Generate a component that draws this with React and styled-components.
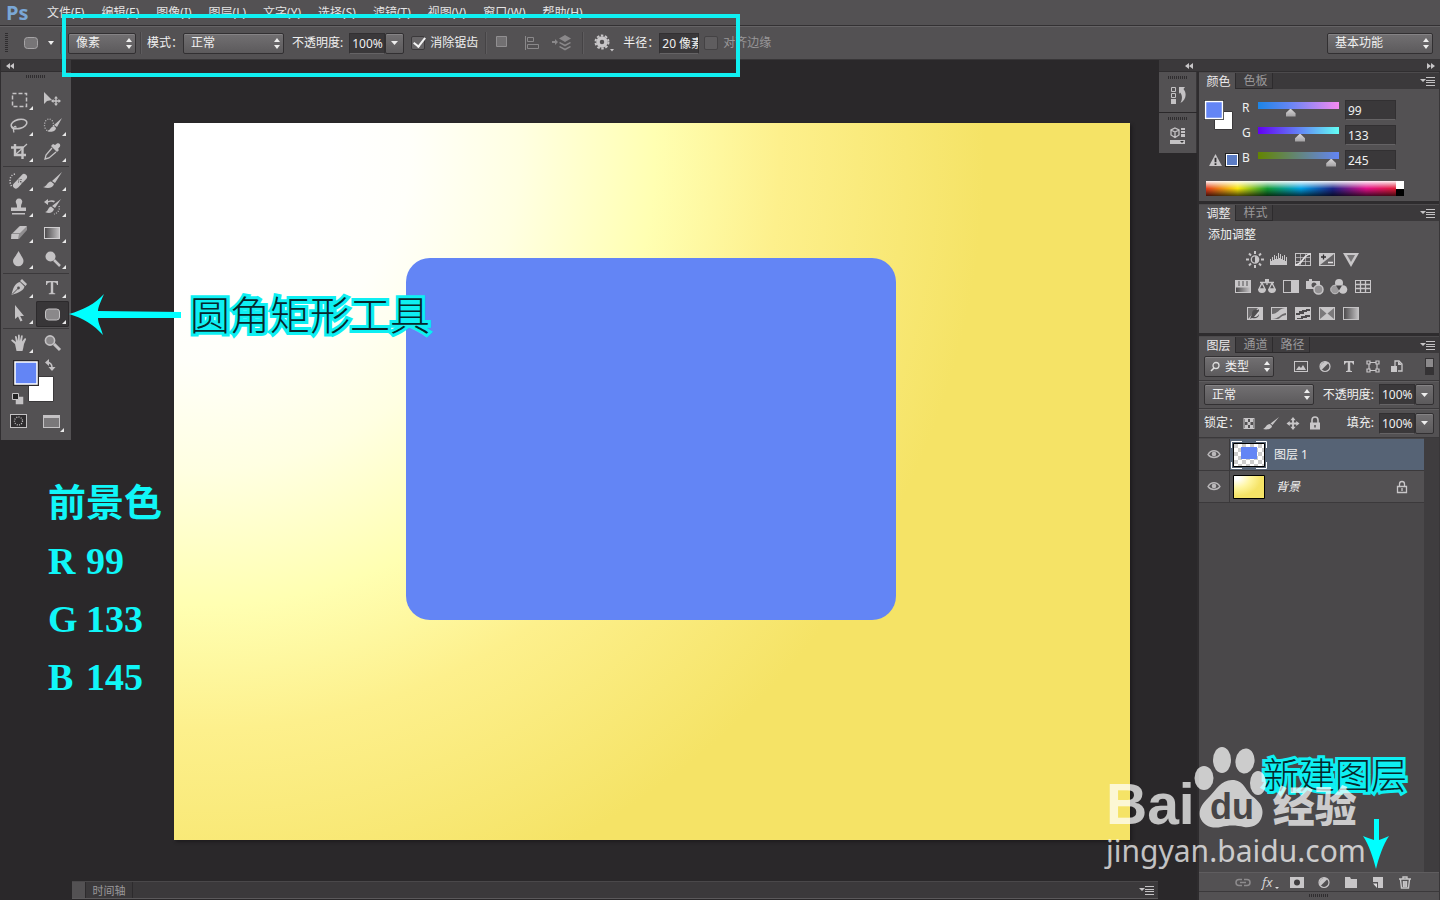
import React, { useState } from 'react';
import styled, { createGlobalStyle, css } from 'styled-components';

const GlobalStyle = createGlobalStyle`
  * {
    box-sizing: border-box;
  }

  body {
    margin: 0;
    background: #2a282a;
    color: #f0f0f0;
    font: 12px/16px "Noto Sans", "Noto Sans CJK SC", sans-serif;
    overflow: hidden;
  }

  button,
  input,
  select {
    font: inherit;
    color: inherit;
    margin: 0;
    padding: 0;
    border: 0;
    outline: 0;
    background: none;
  }
`;

const raised = css`
  border: 1px solid #323032;
  border-radius: 2px;
  background: linear-gradient(#727072, #5c5a5c);
  box-shadow: inset 0 1px 0 #858385;
`;

const Window = styled.div`
  position: relative;
  display: flex;
  flex-direction: column;
  height: 100vh;
`;

/* ---------- top bars ---------- */

const MenuBar = styled.nav`
  display: flex;
  align-items: center;
  gap: 17px;
  height: 26px;
  padding-left: 6px;
  background: #535153;
  border-bottom: 1px solid #333133;
`;

const PsLogo = styled.span`
  width: 24px;
  font: bold 20px/24px "Open Sans", sans-serif;
  color: #7aa7d6;
`;

const MenuItem = styled.button`
  white-space: nowrap;
  color: #e4e4e4;
`;

const OptionsBar = styled.div`
  display: flex;
  align-items: center;
  height: 34px;
  padding: 0 7px 0 5px;
  background: #535153;
  border-top: 1px solid #656365;
  border-bottom: 1px solid #383638;
  white-space: nowrap;
`;

const Item = styled.div`
  display: flex;
  align-items: center;
  margin-left: ${(p) => p.$gap || 0}px;
`;

const IconRow = styled(Item)`
  gap: ${(p) => p.$space}px;
`;

const Push = styled.div`
  margin-left: auto;
`;

const Divider = styled.span`
  width: 2px;
  height: 22px;
  margin-left: ${(p) => p.$gap || 0}px;
  background: #454345;
  border-right: 1px solid #5e5c5e;
`;

const SideGrip = styled.span`
  width: 3px;
  height: 20px;
  background: repeating-linear-gradient(#2f2d2f 0 1px, transparent 1px 2px);
`;

const SelectWrap = styled.div`
  position: relative;
  width: ${(p) => p.$width}px;

  select {
    width: 100%;
    height: 21px;
    padding-left: ${(p) => p.$indent || 7}px;
    appearance: none;
    ${raised}
  }

  > svg {
    position: absolute;
    top: 5px;
    right: 3px;
    pointer-events: none;
  }

  > svg:nth-of-type(2) {
    right: auto;
    left: 6px;
  }
`;

const Field = styled.input`
  width: ${(p) => p.$width}px;
  height: ${(p) => p.$height || 21}px;
  padding-left: 2px;
  background: #3a383a;
  border: 1px solid #323032;
  border-bottom-color: #656365;
`;

const DropButton = styled.button`
  display: grid;
  place-items: center;
  width: 19px;
  height: 21px;
  ${raised}
`;

const Check = styled.input.attrs({ type: 'checkbox' })`
  appearance: none;
  display: grid;
  place-items: center;
  width: 14px;
  height: 14px;
  border: 1px solid #3b393b;
  border-radius: 2px;
  background: #676567;
  margin-right: 5px;
  opacity: ${(p) => (p.disabled ? 0.6 : 1)};

  &:checked::after {
    content: '';
    width: 5px;
    height: 10px;
    border: solid #f4f4f4;
    border-width: 0 2px 2px 0;
    transform: translate(1px, -2px) rotate(38deg);
  }
`;

const CheckLabel = styled.label`
  color: ${(p) => (p.$dim ? '#989698' : '#f0f0f0')};
`;

const IconButton = styled.button`
  display: grid;
  place-items: center;
  color: ${(p) => (p.$dim ? '#8a888a' : '#c8c6c8')};
`;

/* ---------- workspace ---------- */

const Workspace = styled.div`
  display: flex;
  flex: 1;
  min-height: 0;
`;

const Collapse = styled.div`
  display: flex;
  align-items: center;
  justify-content: space-between;
  height: 12px;
  padding: 0 5px 0 ${(p) => p.$indent || 5}px;
  background: #3b393b;
  border-bottom: 1px solid #302e30;
`;

const ToolBox = styled.aside`
  align-self: flex-start;
  width: 71px;
  background: #535153;
  border-left: 1px solid #302e30;
`;

const Grip = styled.div`
  width: 20px;
  height: 3px;
  margin: ${(p) => p.$margin || '4px auto 6px'};
  background: repeating-linear-gradient(90deg, #2f2d2f 0 1px, transparent 1px 2px);
`;

const ToolGrid = styled.div`
  display: grid;
  grid-template-columns: 33px 33px;
  margin: 0 2px;
  padding-bottom: 1px;
  border-bottom: ${(p) => (p.$last ? '0' : '1px solid #3b393b')};
  margin-bottom: 1px;
`;

const ToolButton = styled.button`
  height: 26px;
  color: #c4c2c4;
  border-radius: 2px;
  background: ${(p) => (p.$active ? '#383638' : 'none')};
  box-shadow: ${(p) => (p.$active ? 'inset 0 0 0 1px #2c2a2c' : 'none')};

  svg {
    display: block;
  }
`;

const ToolFooter = styled.div`
  display: flex;
  justify-content: space-between;
  height: 26px;
  padding: 0 7px 0 9px;
  color: #c4c2c4;
`;

const Stage = styled.main`
  position: relative;
  display: flex;
  flex-direction: column;
  flex: 1;
  min-width: 0;
  margin-left: 1px;
`;

const Artboard = styled.div`
  flex: 1;
  margin: 63px 29px 41px 102px;
  padding: 135px 234px 220px 232px;
  display: flex;
  background: radial-gradient(
    circle at 26px 27px,
    #ffffff 0,
    #ffffff 130px,
    #fffffa 210px,
    #ffffe2 320px,
    #ffffb2 455px,
    #fdf08c 580px,
    #f5e366 785px
  );
  box-shadow: 2px 2px 3px #1e1c1e;
`;

const RoundedShape = styled.div`
  flex: 1;
  border-radius: 24px;
  background: #6385f5;
`;

const Timeline = styled.div`
  display: flex;
  align-items: stretch;
  height: 18px;
  margin: 0 1px 1px 0;
  background: #3b393b;
  border-top: 1px solid #4a484a;
  border-bottom: 1px solid #5b595b;

  &::before {
    content: '';
    width: 13px;
    background: #535153;
  }
`;

const TimelineTab = styled.button`
  width: 48px;
  border: solid #2d2b2d;
  border-width: 0 1px;
  font-size: 11px;
  line-height: 15px;
  color: #9a989a;
`;

/* ---------- dock ---------- */

const Dock = styled.aside`
  display: flex;
  flex-direction: column;
  width: 281px;
  background: #2e2c2e;
`;

const DockBody = styled.div`
  display: flex;
  flex: 1;
  gap: 2px;
  min-height: 0;
`;

const IconStrip = styled.div`
  width: 38px;
  background: #2a282a;
`;

const StripCell = styled.button`
  display: flex;
  flex-direction: column;
  align-items: center;
  width: 100%;
  height: 40px;
  margin-bottom: 1px;
  background: #535153;
  border-right: 1px solid #383638;
  color: #c4c2c4;
`;

const Panels = styled.div`
  display: flex;
  flex-direction: column;
  flex: 1;
  gap: 3px;
  min-width: 0;
  border-right: 1px solid #383638;
`;

const Panel = styled.section`
  display: flex;
  flex-direction: column;
  flex: ${(p) => (p.$grow ? '1' : 'none')};
  height: ${(p) => (p.$height ? `${p.$height}px` : 'auto')};
  min-height: 0;
  background: #535153;
`;

const Tabs = styled.div`
  display: flex;
  height: 17px;
  flex: none;
  background: #3b393b;
  border-top: 1px solid #4c4a4c;
`;

const Tab = styled.button`
  width: 37px;
  padding-left: 3px;
  line-height: 15px;
  color: ${(p) => (p.$active ? '#eceaec' : '#9a989a')};
  background: ${(p) => (p.$active ? '#535153' : '#3f3d3f')};
  border-right: 1px solid #2d2b2d;
  border-bottom: ${(p) => (p.$active ? '0' : '1px solid #2d2b2d')};
`;

const TabMenu = styled.button`
  display: grid;
  place-items: center;
  margin-left: auto;
  padding-right: 4px;
  color: #c4c2c4;
`;

const ColorBody = styled.div`
  display: grid;
  grid-template-columns: 34px 1fr;
  column-gap: 4px;
  padding: 11px 44px 0 5px;
`;

const SwatchColumn = styled.div`
  display: flex;
  flex-direction: column;
  justify-content: space-between;
  height: 66px;
`;

const WarnRow = styled.div`
  display: flex;
  align-items: center;
  gap: 4px;
  padding-left: 5px;
`;

const SmallSwatch = styled.span`
  width: 12px;
  height: 12px;
  background: #5b7cc4;
  border: 1px solid #fff;
  box-shadow: 0 0 0 1px #222;
`;

const Channel = styled.label`
  display: grid;
  grid-template-columns: 15px 81px 50px;
  column-gap: 1px;
  height: 25px;

  input[type='text'] {
    margin-left: 5px;
  }
`;

const Slider = styled.input.attrs({ type: 'range', min: 0, max: 255 })`
  appearance: none;
  width: 81px;
  height: 17px;

  &::-webkit-slider-runnable-track {
    height: 16px;
    background: ${(p) => p.$track} 0 1px / 100% 7px no-repeat;
  }

  &::-webkit-slider-thumb {
    appearance: none;
    width: 10px;
    height: 8px;
    margin-top: 8px;
    background: linear-gradient(#d8d6d8, #a09ea0);
    clip-path: polygon(50% 0, 100% 60%, 100% 100%, 0 100%, 0 60%);
  }
`;

const Spectrum = styled.div`
  display: flex;
  justify-content: flex-end;
  height: 15px;
  margin: 6px 35px 0 7px;
  background:
    linear-gradient(rgba(255, 255, 255, 0.95), transparent 50%, rgba(0, 0, 0, 0.7)),
    linear-gradient(90deg, #e33a1e, #f8e60c 16%, #149b36 31%, #00a0e4 48%, #1c2488 64%, #e2108a 81%, #e02020);

  &::after {
    content: '';
    width: 8px;
    background: linear-gradient(#fff 50%, #000 50%);
  }
`;

const AdjustTitle = styled.p`
  margin: 6px 0 3px 9px;
`;

const AdjustRow = styled.div`
  display: flex;
  justify-content: center;
  gap: 6px;
  height: 27px;
  padding-right: 32px;
  align-items: center;
`;

const LayerBar = styled.div`
  display: flex;
  align-items: center;
  flex: none;
  height: ${(p) => p.$height || 28}px;
  padding: 0 5px;
  border-bottom: 1px solid #3b393b;
  box-shadow: 0 1px 0 #5f5d5f;
  white-space: nowrap;
`;

const Toggle = styled.button`
  width: 9px;
  height: 17px;
  margin-left: auto;
  background: linear-gradient(#8c8a8c 50%, #353335 50%);
  border: 1px solid #353335;
`;

const LayerList = styled.ul`
  flex: 1;
  margin: 0;
  padding: 1px 15px 0 0;
  list-style: none;
  background: linear-gradient(90deg, #4a484a calc(100% - 15px), #3f3d3f calc(100% - 15px));
`;

const LayerRow = styled.li`
  display: flex;
  align-items: center;
  height: 32px;
  padding-right: 13px;
  border-bottom: 1px solid #3b393b;
  background: ${(p) => (p.$active ? '#566375' : '#535153')};
  font-style: ${(p) => (p.$italic ? 'italic' : 'normal')};
`;

const EyeButton = styled.button`
  display: grid;
  place-items: center;
  width: 31px;
  height: 31px;
  background: #535153;
  border-right: 1px solid #3b393b;
  color: #bab8ba;
`;

const LayerName = styled.span`
  flex: 1;
  padding-left: ${(p) => p.$pad}px;
`;

const LayerFooter = styled.div`
  display: flex;
  align-items: center;
  height: 20px;
  padding: 0 2px 0 35px;
  gap: 9px;
  border-top: 1px solid #5f5d5f;
  border-bottom: 1px solid #3b393b;
`;

/* ---------- notes over the window ---------- */

const Frame = styled.div`
  position: absolute;
  top: 14px;
  left: 62px;
  width: 678px;
  height: 63px;
  border: 4px solid #10f0f2;
  pointer-events: none;
`;

const Outlined = styled.strong`
  position: absolute;
  font-family: "Noto Sans CJK SC", sans-serif;
  font-weight: 300;
  color: #06282c;
  -webkit-text-stroke: 6px #0eeff2;
  paint-order: stroke fill;
  stroke-linejoin: round;
  white-space: nowrap;
`;

const ToolNote = styled(Outlined)`
  top: 285px;
  left: 190px;
  font-size: 40px;
  line-height: 56px;
`;

const LayerNote = styled(Outlined)`
  right: 33px;
  bottom: 101px;
  font-size: 36px;
  line-height: 52px;
`;

const ColorNote = styled.div`
  position: absolute;
  top: 474px;
  left: 48px;
  font: bold 38px/58px "Liberation Serif", "Noto Sans CJK SC", serif;
  color: #10f6f8;
  white-space: nowrap;
`;

const NoteRow = styled.div`
  display: grid;
  grid-template-columns: 38px auto;
`;

const ArrowLeft = styled.svg`
  position: absolute;
  top: 293px;
  left: 69px;
`;

const ArrowDown = styled.svg`
  position: absolute;
  right: 49px;
  bottom: 31px;
`;

const Watermark = styled.div`
  position: absolute;
  right: 74px;
  bottom: 29px;
  width: 260px;
  color: rgba(255, 255, 255, 0.72);
  pointer-events: none;
`;

const Brand = styled.div`
  display: flex;
  align-items: flex-end;
  height: 84px;
  font: bold 57px/54px "Liberation Sans", sans-serif;

  b {
    font: 900 42px/54px "Noto Sans CJK SC", sans-serif;
    margin-left: 6px;
  }

  svg {
    flex: none;
    margin: 0 0 3px -4px;
  }
`;

const Site = styled.div`
  font: 30px/40px "Noto Sans", sans-serif;
`;

/* ---------- drawings ---------- */

const corner = <path d="M30 19v4h-4z" fill="#e8e8e8" />;

const stroke = { fill: 'none', stroke: 'currentColor', strokeWidth: 2 };
const thin = { fill: 'none', stroke: 'currentColor', strokeWidth: 1 };
const fill = { fill: 'currentColor' };
const dark = '#535153';

const crossArrows = 'M0-5l2 2.5H.7V-.7H2.5V-2L5 0 2.5 2V.7H.7v1.8H2L0 5-2 2.5h1.3V.7h-1.8V2L-5 0l2.5-2v1.3h1.8v-1.8H-2z';

const tools = {
  marquee: <rect x="9.5" y="6.5" width="14" height="13" {...thin} strokeWidth="1.5" strokeDasharray="4 2" />,
  move: (
    <g {...fill}>
      <path d="M8 5v12l3-3 5-1z" />
      <path d={crossArrows} transform="translate(20 14)" />
    </g>
  ),
  lasso: (
    <g {...stroke} strokeWidth="1.6">
      <ellipse cx="16" cy="11" rx="8" ry="4.5" transform="rotate(-14 16 11)" />
      <path d="M9 13c-1 3 4 4 4 1.500s-4-1-2 5" strokeWidth="1.2" />
    </g>
  ),
  quick: (
    <g>
      <ellipse cx="13" cy="12" rx="4.500" ry="6" {...thin} strokeWidth="1.300" strokeDasharray="1 1.5" />
      <path d="M26 5l-5 9-3-2zM18 13l2 2c0 3-5 5-9 3 3 0 3-4 7-5z" {...fill} />
    </g>
  ),
  crop: (
    <g {...stroke}>
      <path d="M12 5v11h11M8 8.500h11.500V20" strokeWidth="2.400" />
      <path d="M12 16L24 5" strokeWidth="1.200" />
    </g>
  ),
  dropper: (
    <g>
      <path d="M19 6l2-1.500c2-1 4 1 3 3L22 10l1 1-2 2-6-6 2-2z" {...fill} />
      <path d="M16 9l-6 7-1 4 4-1 7-6" {...stroke} strokeWidth="1.300" />
    </g>
  ),
  heal: (
    <g>
      <path d="M12 6c-6 1-6 9-3 13" {...thin} strokeWidth="1.500" strokeDasharray="1.200 1.500" />
      <path d="M13 17.500L21 9" stroke="currentColor" strokeWidth="6" strokeLinecap="round" />
      <path d="M14 10l6 6M13 13h.1M16 10h.1M15 14h3M18 11v3" stroke={dark} strokeWidth="1.200" strokeDasharray="1 1.200" />
    </g>
  ),
  brush: <path d="M26 4L19 15l-3-2zM15 13.500l3 2.500c-1 4-6 5-11 3 4-.5 4-5 8-5.500z" {...fill} />,
  stamp: (
    <g {...fill}>
      <path d="M16 4.500a3.200 3.200 0 013 4.500c-1 2-1 3-1 4.500h5V17H8v-3.500h6c0-1.500 0-2.500-1-4.500a3.200 3.200 0 013-4.500z" />
      <path d="M9 19h13v1.500H9z" />
    </g>
  ),
  history: (
    <g>
      <path d="M25 5l-6 9-3-2zM15 12.500l3 2.500c-1 4-5 5-9 3 3 0 3-5 6-5.500zM8 8l4-3v2c3-1 5-1 7 0l-1 1.500c-2-1-4-1-6 0V11z" {...fill} />
      <path d="M23 12c1 4-1 7-5 8" {...thin} strokeWidth="1.300" strokeDasharray="1 1.500" />
    </g>
  ),
  eraser: (
    <g>
      <path d="M8.500 14L16 6.500h8V10l-8 9H8.500z" fill="#8f8d8f" />
      <path d="M10 13l7-7h7l-7 7zM8.500 14H16l-1 5H8z" {...fill} />
    </g>
  ),
  gradient: <rect x="8.500" y="7.500" width="15" height="11" fill="url(#fade)" stroke="#d0ced0" />,
  drop: <path d="M15.500 5c2 4 5 7 5 10a5 5 0 01-10.500 0c0-3 4-6 5.500-10z" {...fill} />,
  dodge: (
    <g>
      <circle cx="14.500" cy="10.500" r="5" {...fill} />
      <path d="M18 14l6 6" {...stroke} strokeWidth="2.500" />
    </g>
  ),
  pen: (
    <g>
      <path d="M19 4l5 5-1.500 2-5.500-5zM17 7l4.500 4.500c-1 4-5 6-13 8.500C10 13 12 8 17 7z" {...fill} />
      <path d="M9 19.500l6-6" stroke={dark} />
      <circle cx="15.500" cy="13" r="1.400" fill={dark} />
    </g>
  ),
  type: <path d="M10 6h12v4h-1c-.3-2-1-2.800-3.800-2.800V17c0 1 .5 1.300 2 1.300v.9h-6.400v-.9c1.500 0 2-.3 2-1.300V7.200C12 7.200 11.300 8 11 10h-1z" {...fill} />,
  path: <path d="M12 4v14l3-2.500 2.500 5 2-1-2.300-4.500H21z" {...fill} />,
  shape: <rect x="9.500" y="8" width="14" height="11" rx="3" fill="#8a888a" stroke="#c4c2c4" />,
  hand: (
    <path
      d="M12 14l-3.500-3c-.8-1 .5-2 1.400-1.200L13 12l-1-5c-.2-1.300 1.500-1.500 1.800-.3L15 11V5.500c0-1.200 1.800-1.200 1.800 0V11l1.200-5c.3-1 1.900-.8 1.700.4L19 11.500l2.500-3c.8-.8 2 0 1.500 1L21 14c-.5 3-1 5-1.500 7h-6z"
      {...fill}
    />
  ),
  zoom: (
    <g>
      <circle cx="14" cy="10.500" r="4.600" fill="#8a888a" stroke="currentColor" strokeWidth="1.600" />
      <path d="M18 14l6 6" {...stroke} strokeWidth="3" />
    </g>
  ),
};

const toolGroups = [
  [['marquee', 1], ['move', 0], ['lasso', 1], ['quick', 1], ['crop', 1], ['dropper', 1]],
  [['heal', 1], ['brush', 1], ['stamp', 1], ['history', 1], ['eraser', 1], ['gradient', 1], ['drop', 1], ['dodge', 1]],
  [['pen', 1], ['type', 1], ['path', 1], ['shape', 1]],
  [['hand', 1], ['zoom', 0]],
];

const frame = <rect x="1.500" y="2.500" width="15" height="12" {...thin} />;

// 18 x 17 drawings used by the panels
const glyphs = {
  sun: (
    <g>
      <circle cx="9" cy="8.500" r="3.700" {...stroke} strokeWidth="1.300" />
      <path d="M9 5a3.500 3.500 0 010 7z" {...fill} />
      <path d="M9 0v3M9 14v3M0 8.500h3M15 8.500h3M3 2.500l2 2M13 12.500l2 2M15 2.500l-2 2M5 12.500l-2 2" {...stroke} />
    </g>
  ),
  levels: <path d="M0 14V8h1v2h1V6h1v3h1V4h1v4h1V5h1v3h1V2h1v5h1V3h1v5h1V5h1v4h1V4h1v6h1V6h1v8z" {...fill} />,
  curves: (
    <g>
      {frame}
      <path d="M2 6.500h15M2 10.500h15M6.500 3v12M11.500 3v12" {...thin} strokeWidth=".7" />
      <path d="M1 14c9 0 7-11 16-11" fill="none" stroke="#e4e2e4" strokeWidth="1.600" />
    </g>
  ),
  exposure: (
    <g>
      <path d="M1 2h16v13H1z" {...fill} />
      <path d="M2 14L16 3v11z" fill="#656365" />
      <path d="M3 6h5M5.500 3.500v5" stroke="#2f2d2f" strokeWidth="1.300" />
      <path d="M10 11.500h5" stroke="#e0dee0" strokeWidth="1.500" />
    </g>
  ),
  vibrance: (
    <g>
      <path d="M1 2h16L9 16z" {...fill} />
      <path d="M5 4h8l-4 7z" fill="#777577" />
    </g>
  ),
  hue: (
    <g>
      <path d="M1 2h16v13H1z" {...fill} />
      <path d="M5 3v5M9 3v5M13 3v5" stroke={dark} />
      <path d="M2 9.500h14V14H2z" fill="url(#fade)" />
    </g>
  ),
  balance: (
    <g>
      <path d="M9 1v6M2 4.500h14M4 5l-3 6h6zM14 5l-3 6h6z" {...thin} strokeWidth="1.300" />
      <path d="M0 11a4 4 0 008 0zM10 11a4 4 0 008 0zM7 1h4v4H7z" {...fill} />
    </g>
  ),
  bw: (
    <g>
      {frame}
      <path d="M9 2h8v13H9z" {...fill} />
    </g>
  ),
  photo: (
    <g>
      <path d="M0 3h3V1h3v2h8v8H0z" {...fill} />
      <circle cx="8" cy="7" r="2.500" fill={dark} />
      <circle cx="12.500" cy="11.500" r="4.500" fill="#939193" stroke="currentColor" strokeWidth="1.500" />
    </g>
  ),
  mixer: (
    <g>
      <circle cx="9" cy="5" r="4" {...fill} />
      <circle cx="5" cy="11.500" r="4.300" fill="#9c9a9c" stroke="#c4c2c4" />
      <circle cx="13" cy="11.500" r="4.300" {...fill} />
      <path d="M6 7.500h6l-3 5z" fill="#474547" />
    </g>
  ),
  lookup: (
    <g>
      {frame}
      <path d="M1 6.500h16M1 10.500h16M6.500 2v13M11.500 2v13" {...thin} strokeWidth="1.300" />
    </g>
  ),
  invert: (
    <g>
      <path d="M1 2h16v13H1z" {...fill} />
      <path d="M2 14V3h10z" fill="#6b696b" />
      <path d="M6 9a4 4 0 016-4l1-1v5c0 4-4 5-7 4l-2 1z" fill="#504e50" />
      <path d="M8 12l5-6c1 4-2 6-5 6z" fill="#d4d2d4" />
    </g>
  ),
  poster: (
    <g>
      <path d="M1 2h16v13H1z" {...fill} />
      <path d="M2 9c6 0 6-5 13-6H2zM2 14c7 0 8-5 14-6v2c-6 1-6 4-8 4z" fill="#6b696b" />
    </g>
  ),
  threshold: (
    <g>
      <path d="M1 2h16v13H1z" {...fill} />
      <path d="M2 8h3V6h3V5h4V4h4v2h-3v1h-3v2H6v1H2zM3 13h4v-2h4v-1h5v2h-3v1H9v1H3z" fill="#4b494b" />
    </g>
  ),
  selective: (
    <g>
      <path d="M1 2h16v13H1z" {...fill} />
      <path d="M2 3v11l6.500-5.500zM16 3v11L9.500 8.500z" fill="#7b797b" />
    </g>
  ),
  map: <rect x="1.500" y="2.500" width="15" height="12" fill="url(#fade)" stroke="#c4c2c4" />,
  image: (
    <g>
      <rect x="2.500" y="3.500" width="13" height="10" {...thin} />
      <path d="M4 12l3-4 2 2 2-3 3 5z" {...fill} />
    </g>
  ),
  half: (
    <g>
      <circle cx="9" cy="8.500" r="5" {...stroke} strokeWidth="1.200" />
      <path d="M5.500 12A5 5 0 0112.500 5z" {...fill} />
    </g>
  ),
  text: <path d="M4 3h10v3.500h-1C12.700 5 12 4.500 10.200 4.500V12c0 .8.500 1 1.800 1v1H6v-1c1.300 0 1.800-.2 1.800-1V4.500C6 4.500 5.300 5 5 6.500H4z" {...fill} />,
  vector: (
    <g {...thin} strokeWidth="1.200">
      <path d="M5 4.500h8M5 12.500h8M5 5v7M13 5v7" />
      <path d="M3 3h3v3H3zM12 3h3v3h-3zM3 11h3v3H3zM12 11h3v3h-3z" fill={dark} />
    </g>
  ),
  smart: (
    <g>
      <path d="M7 8V3h4l3 3v7h-4" {...stroke} strokeWidth="1.300" />
      <path d="M10 3v4h4M3 8h6v6H3z" {...fill} />
    </g>
  ),
  checker: (
    <g>
      <rect x="4" y="3.500" width="10" height="10" {...thin} />
      <path d="M5 4h3v3H5zM10 4h3v3h-3zM7.500 7h3v3h-3zM5 10h3v3H5zM10 10h3v3h-3z" {...fill} />
    </g>
  ),
  paint: <path d="M17 2l-6.500 8-2-1.500zM8 9l2 2c0 3-5 4-9 3 3-1 3-5 7-5z" {...fill} />,
  cross: <path d={crossArrows} transform="translate(9 8.500) scale(1.300)" {...fill} />,
  lock: (
    <g>
      <path d="M4 7.500h10v7H4z" {...fill} />
      <path d="M6 8V5a3 3 0 016 0v3" {...stroke} strokeWidth="1.600" />
      <path d="M9 10v2.500" stroke={dark} strokeWidth="1.500" />
    </g>
  ),
  lockOpen: (
    <g {...thin} strokeWidth="1.300">
      <path d="M4.500 8.500h9v6h-9zM6.500 8V6a2.500 2.500 0 015 0v2M9 10v3" />
    </g>
  ),
  eye: (
    <g>
      <path d="M3 8.500c3-5 9-5 12 0-3 4-9 4-12 0z" {...stroke} strokeWidth="1.300" />
      <circle cx="9" cy="8" r="2.300" {...fill} />
    </g>
  ),
  link: (
    <g {...stroke} strokeWidth="1.500" opacity=".5">
      <path d="M8 5.500H5a3 3 0 000 6h3M10 5.500h3a3 3 0 010 6h-3M6 8.500h6" />
    </g>
  ),
  mask: (
    <g>
      <path d="M2 3h14v11H2z" {...fill} />
      <circle cx="9" cy="8.500" r="3" fill="#3f3d3f" />
    </g>
  ),
  folder: <path d="M3 3h5l1 2h6v9H3z" {...fill} />,
  page: (
    <g>
      <path d="M4 3h10v11H9V8H4z" {...fill} />
      <path d="M4 9.500h4V14z" fill="#dedcde" />
    </g>
  ),
  trash: (
    <g {...thin} strokeWidth="1.400">
      <path d="M3 5h12M7 4.500V3h4v1.500M4.500 5.500l1 8.500h7l1-8.500M7.500 7v6M10.500 7v6M9 7v6" />
    </g>
  ),
};

function Glyph({ name }) {
  return (
    <svg width="18" height="17" viewBox="0 0 18 17" aria-hidden="true">
      {glyphs[name]}
    </svg>
  );
}

const UpDown = () => (
  <svg width="8" height="11" viewBox="0 0 8 11" fill="#eee">
    <path d="M4 0l3 4H1zM4 11l3-4H1z" />
  </svg>
);

const Down = () => (
  <svg width="7" height="4" viewBox="0 0 7 4" fill="#eee">
    <path d="M0 0h7L3.500 4z" />
  </svg>
);

const Chevrons = ({ flip }) => (
  <svg width="8" height="6" viewBox="0 0 8 6" fill="#c8c6c8">
    <path d={flip ? 'M0 0l4 3-4 3zM4 0l4 3-4 3z' : 'M4 0L0 3l4 3zM8 0L4 3l4 3z'} />
  </svg>
);

const MenuGlyph = () => (
  <svg width="15" height="9" viewBox="0 0 15 9" fill="currentColor">
    <path d="M0 2h6L3 5zM6 0h9v1H6zM6 3h9v1H6zM6 5h9v1H6zM6 8h9v1H6z" />
  </svg>
);

const Swatches = () => (
  <svg width="30" height="30" viewBox="0 0 30 30">
    <path d="M10.500 11.500h18v18h-18z" fill="#fff" stroke="#3b393b" />
    <path d="M.5.500h19v19H.5z" fill="#222" stroke="#222" />
    <path d="M1.500 1.500h17v17h-17z" fill="#6385f5" stroke="#fff" strokeWidth="1.500" />
  </svg>
);

const ToolSwatches = () => (
  <svg width="68" height="56" viewBox="0 2 68 56" display="block">
    <path d="M27.500 20.500h25v25h-25z" fill="#fff" stroke="#3b393b" />
    <path d="M12 4h26v26H12z" fill="#2c2a2c" />
    <path d="M14 6h22v22H14z" fill="#6385f5" stroke="#fff" strokeWidth="1.500" />
    <g fill="none" stroke="#c4c2c4" strokeWidth="1.500">
      <path d="M46 6.500c4 0 5 2 5 5" />
      <path d="M15.500 41.500h6v6h-6z" fill="#c4c2c4" />
    </g>
    <path d="M44 6.500L48 3v7zM51 15l-3.500-4h7z" fill="#c4c2c4" />
    <path d="M11.500 37.500h6v6h-6z" fill="#222" stroke="#c4c2c4" />
  </svg>
);

function PickList({ width, value, label, icon, indent }) {
  return (
    <SelectWrap $width={width} $indent={indent}>
      <select aria-label={label} defaultValue={value}>
        <option>{value}</option>
      </select>
      <UpDown />
      {icon}
    </SelectWrap>
  );
}

function Percent({ id }) {
  return (
    <>
      <Field id={id} type="text" defaultValue="100%" $width={36} />
      <DropButton aria-label="展开">
        <Down />
      </DropButton>
    </>
  );
}

function PanelTabs({ names }) {
  const [current, setCurrent] = useState(names[0]);
  return (
    <Tabs role="tablist">
      {names.map((name) => (
        <Tab key={name} role="tab" aria-selected={name === current} $active={name === current} onClick={() => setCurrent(name)}>
          {name}
        </Tab>
      ))}
      <TabMenu aria-label="菜单">
        <MenuGlyph />
      </TabMenu>
    </Tabs>
  );
}

const menus = ['文件(F)', '编辑(E)', '图像(I)', '图层(L)', '文字(Y)', '选择(S)', '滤镜(T)', '视图(V)', '窗口(W)', '帮助(H)'];

const channels = [
  ['R', 99, 'linear-gradient(90deg, #1c85e6, #6385f5 38%, #f58af0)'],
  ['G', 133, 'linear-gradient(90deg, #6200f2, #6385f5 52%, #63fff5)'],
  ['B', 245, 'linear-gradient(90deg, #638500, #6385f5)'],
];

const adjustments = [
  ['sun', 'levels', 'curves', 'exposure', 'vibrance'],
  ['hue', 'balance', 'bw', 'photo', 'mixer', 'lookup'],
  ['invert', 'poster', 'threshold', 'selective', 'map'],
];

function Options() {
  return (
    <OptionsBar>
      <SideGrip />
      <Item $gap={15}>
        <svg width="32" height="16" viewBox="0 0 32 16">
          <rect x="1.500" y="2.500" width="13" height="11" rx="3" fill="#777577" stroke="#a6a4a6" />
          <path d="M25 6h6l-3 4z" fill="#eee" />
        </svg>
      </Item>
      <Divider $gap={5} />
      <Item $gap={6}>
        <PickList width={68} value="像素" label="工具模式" />
      </Item>
      <Divider $gap={4} />
      <Item $gap={5}>模式：</Item>
      <Item>
        <PickList width={101} value="正常" label="模式" />
      </Item>
      <Item as="label" htmlFor="opacity" $gap={8}>
        不透明度:
      </Item>
      <Item $gap={6}>
        <Percent id="opacity" />
      </Item>
      <Item $gap={7}>
        <Check id="smooth" defaultChecked />
        <CheckLabel htmlFor="smooth">消除锯齿</CheckLabel>
      </Item>
      <Divider $gap={7} />
      <Item $gap={6}>
        <IconButton $dim aria-label="路径操作">
          <svg width="20" height="18" viewBox="0 0 20 18">
            <path d="M3.500 2.500h10v10h-10z" fill="#727072" stroke="#918f91" />
          </svg>
        </IconButton>
      </Item>
      <Item $gap={9}>
        <IconButton $dim aria-label="对齐">
          <svg width="20" height="18" viewBox="0 0 20 18" {...thin}>
            <path d="M3.500 2v14M5.500 3.500h6v4h-6zM5.500 10.500h11v4h-11z" />
          </svg>
        </IconButton>
      </Item>
      <Item $gap={10}>
        <IconButton $dim aria-label="排列">
          <svg width="22" height="18" viewBox="0 0 22 18" {...fill}>
            <path d="M0 7h3V5l3 3-3 3V9H0zM13 1l6 3.500L13 8 7 4.500zM8 8l5 2.500L18 8l1 1-6 3.500L7 9zM8 12l5 2.500 5-2.500 1 1-6 3.500L7 13z" />
          </svg>
        </IconButton>
      </Item>
      <Divider $gap={8} />
      <Item $gap={9}>
        <IconButton aria-label="几何选项">
          <svg width="22" height="20" viewBox="0 0 22 20">
            <circle cx="9" cy="9" r="4" {...stroke} strokeWidth="3.500" />
            <circle cx="9" cy="9" r="6.500" {...stroke} strokeDasharray="2.500 1.600" />
            <path d="M17 16h4l-2 2.500z" {...fill} />
          </svg>
        </IconButton>
      </Item>
      <Item as="label" htmlFor="radius" $gap={8}>
        半径：
      </Item>
      <Item>
        <Field id="radius" type="text" defaultValue="20 像素" $width={40} />
      </Item>
      <Item $gap={5}>
        <Check id="edges" disabled />
        <CheckLabel htmlFor="edges" $dim>
          对齐边缘
        </CheckLabel>
      </Item>
      <Push>
        <PickList width={106} value="基本功能" label="工作区" />
      </Push>
    </OptionsBar>
  );
}

function Tools() {
  const [active, setActive] = useState('shape');
  return (
    <ToolBox>
      <Collapse>
        <Chevrons />
      </Collapse>
      <Grip $margin="3px auto 9px" />
      {toolGroups.map((group, i) => (
        <ToolGrid key={group[0][0]} $last={i === toolGroups.length - 1}>
          {group.map(([name, more]) => (
            <ToolButton key={name} aria-label={name} $active={name === active} onClick={() => setActive(name)}>
              <svg width="33" height="26" viewBox="0 0 33 26">
                {tools[name]}
                {more ? corner : null}
              </svg>
            </ToolButton>
          ))}
        </ToolGrid>
      ))}
      <ToolSwatches />
      <ToolFooter>
        <svg width="18" height="15" viewBox="0 0 18 15">
          <rect x=".5" y=".5" width="16" height="13" fill="#2f2d2f" stroke="currentColor" />
          <circle cx="8.500" cy="7" r="4" {...thin} strokeWidth="1.300" strokeDasharray="1 1.300" />
        </svg>
        <svg width="22" height="20" viewBox="0 0 22 20">
          <rect x="1.500" y="1.500" width="16" height="12" fill="#7a787a" stroke="currentColor" />
          <path d="M1 1h17v3H1z" {...fill} />
          <path d="M22 14v4h-4z" fill="#e8e8e8" />
        </svg>
      </ToolFooter>
    </ToolBox>
  );
}

function ColorPanel() {
  return (
    <Panel $height={129}>
      <PanelTabs names={['颜色', '色板']} />
      <ColorBody>
        <SwatchColumn>
          <Swatches />
          <WarnRow>
            <svg width="13" height="12" viewBox="0 0 14 13">
              <path d="M7 0l7 13H0z" fill="#c8c6c8" />
              <path d="M6 4h2v5H6zM6 10h2v2H6z" fill="#2f2d2f" />
            </svg>
            <SmallSwatch />
          </WarnRow>
        </SwatchColumn>
        <div>
          {channels.map(([name, value, track]) => (
            <Channel key={name}>
              {name}
              <Slider defaultValue={value} $track={track} aria-label={name} />
              <Field type="text" defaultValue={value} aria-label={name} $width={51} $height={20} />
            </Channel>
          ))}
        </div>
      </ColorBody>
      <Spectrum />
    </Panel>
  );
}

function LayersPanel() {
  return (
    <Panel $grow>
      <PanelTabs names={['图层', '通道', '路径']} />
      <LayerBar>
        <PickList
          width={70}
          value="类型"
          label="筛选"
          indent={20}
          icon={
            <svg width="11" height="11" viewBox="0 0 11 11">
              <circle cx="6" cy="4.500" r="3" fill="none" stroke="#ddd" strokeWidth="1.300" />
              <path d="M4 7l-3 3" stroke="#ddd" strokeWidth="1.600" />
            </svg>
          }
        />
        <IconRow $gap={18} $space={6}>
          {['image', 'half', 'text', 'vector', 'smart'].map((n) => (
            <IconButton key={n} aria-label={n}>
              <Glyph name={n} />
            </IconButton>
          ))}
        </IconRow>
        <Toggle aria-label="开关" />
      </LayerBar>
      <LayerBar>
        <PickList width={110} value="正常" label="混合模式" />
        <Push>
          <Item>
            <label htmlFor="layer-opacity">不透明度:</label>
            <Item $gap={5}>
              <Percent id="layer-opacity" />
            </Item>
          </Item>
        </Push>
      </LayerBar>
      <LayerBar $height={29}>
        锁定：
        <IconRow $space={4}>
          {['checker', 'paint', 'cross', 'lock'].map((n) => (
            <IconButton key={n} aria-label={n}>
              <Glyph name={n} />
            </IconButton>
          ))}
        </IconRow>
        <Push>
          <Item>
            <label htmlFor="layer-fill">填充:</label>
            <Item $gap={5}>
              <Percent id="layer-fill" />
            </Item>
          </Item>
        </Push>
      </LayerBar>
      <LayerList>
        <LayerRow $active>
          <EyeButton aria-label="可见">
            <Glyph name="eye" />
          </EyeButton>
          <svg width="38" height="30" viewBox="0 0 38 30">
            <defs>
              <pattern id="check" width="8" height="8" patternUnits="userSpaceOnUse">
                <path d="M0 0h8v8H0z" fill="#fff" />
                <path d="M0 0h4v4H0zM4 4h4v4H4z" fill="#ccc" />
              </pattern>
            </defs>
            <path d="M3.500 3.500h31v23h-31z" fill="url(#check)" stroke="#000" />
            <path d="M11 7h16v12H11z" fill="#6385f5" />
            <path d="M1.500 8V1.500H12M26 1.500h10.500V8M36.500 22v6.500H26M12 28.500H1.500V22" fill="none" stroke="#fff" />
          </svg>
          <LayerName $pad={6}>图层 1</LayerName>
        </LayerRow>
        <LayerRow $italic>
          <EyeButton aria-label="可见">
            <Glyph name="eye" />
          </EyeButton>
          <svg width="38" height="30" viewBox="0 0 38 30">
            <path d="M3.500 3.500h31v23h-31z" fill="url(#thumb)" stroke="#000" />
          </svg>
          <LayerName $pad={8}>背景</LayerName>
          <IconButton aria-label="锁定">
            <Glyph name="lockOpen" />
          </IconButton>
        </LayerRow>
      </LayerList>
      <LayerFooter>
        <IconButton aria-label="链接">
          <Glyph name="link" />
        </IconButton>
        <IconButton aria-label="样式">
          <svg width="18" height="17" viewBox="0 0 18 17">
            <text x="1" y="13" fill="#d0ced0" fontSize="13" fontStyle="italic">
              fx
            </text>
            <path d="M14 13h4l-2 2z" fill="#ddd" />
          </svg>
        </IconButton>
        {['mask', 'half', 'folder', 'page', 'trash'].map((n) => (
          <IconButton key={n} aria-label={n}>
            <Glyph name={n} />
          </IconButton>
        ))}
      </LayerFooter>
      <Grip $margin="2px auto 3px" />
    </Panel>
  );
}

const Defs = styled.svg`
  position: absolute;
`;

export default function App() {
  return (
    <Window>
      <GlobalStyle />
      <Defs width="0" height="0">
        <defs>
          <linearGradient id="fade">
            <stop offset="0" stopColor="#4a484a" />
            <stop offset="1" stopColor="#c4c2c4" />
          </linearGradient>
          <radialGradient id="thumb" cx=".1" cy=".1" r=".8">
            <stop offset=".1" stopColor="#fff" />
            <stop offset=".55" stopColor="#fff6a0" />
            <stop offset="1" stopColor="#f5e366" />
          </radialGradient>
        </defs>
      </Defs>

      <MenuBar>
        <PsLogo>Ps</PsLogo>
        {menus.map((m) => (
          <MenuItem key={m}>{m}</MenuItem>
        ))}
      </MenuBar>
      <Options />

      <Workspace>
        <Tools />
        <Stage>
          <Artboard>
            <RoundedShape />
          </Artboard>
          <Timeline>
            <TimelineTab>时间轴</TimelineTab>
            <TabMenu aria-label="菜单">
              <MenuGlyph />
            </TabMenu>
          </Timeline>
        </Stage>
        <Dock>
          <Collapse $indent={26}>
            <Chevrons />
            <Chevrons flip />
          </Collapse>
          <DockBody>
            <IconStrip>
              <StripCell aria-label="历史记录">
                <Grip />
                <svg width="18" height="20" viewBox="0 0 18 20">
                  <path d="M2.500 2.500h4v4h-4zM2.500 8.500h4v4h-4z" {...thin} />
                  <path d="M2 14h5v5H2zM10 2h6l-1.500 2c4 5 2 11-3 14 2-4 2-8-.5-10.500L10 9z" {...fill} />
                </svg>
              </StripCell>
              <StripCell aria-label="属性">
                <Grip />
                <svg width="18" height="20" viewBox="0 0 18 20">
                  <path d="M6 2l4 2v5l-4 2.500L2 9V4zM2 4l4 2 4-2M6 6v5" {...thin} strokeWidth="1.300" />
                  <path d="M12 2h4v2h-4zM12 5h4v2h-4zM12 8h4v3h-4zM1 14h15v4H1z" {...fill} />
                  <path d="M11 15h4l-2 2z" fill="#333" />
                </svg>
              </StripCell>
            </IconStrip>
            <Panels>
              <ColorPanel />
              <Panel $height={129}>
                <PanelTabs names={['调整', '样式']} />
                <AdjustTitle>添加调整</AdjustTitle>
                {adjustments.map((row) => (
                  <AdjustRow key={row[0]}>
                    {row.map((n) => (
                      <IconButton key={n} aria-label={n}>
                        <Glyph name={n} />
                      </IconButton>
                    ))}
                  </AdjustRow>
                ))}
              </Panel>
              <LayersPanel />
            </Panels>
          </DockBody>
        </Dock>
      </Workspace>

      <Frame />
      <ArrowLeft width="114" height="44" viewBox="0 0 114 44" fill="#00ffff">
        <path d="M0 21C14 17 26 11 35 1c-3 7-6 13-6 17l83 1v6H29c0 5 3 10 5 17C25 32 14 25 0 21z" />
      </ArrowLeft>
      <ToolNote>圆角矩形工具</ToolNote>
      <ColorNote>
        前景色
        {['R 99', 'G 133', 'B 145'].map((line) => {
          const [letter, value] = line.split(' ');
          return (
            <NoteRow key={letter}>
              <span>{letter}</span>
              <span>{value}</span>
            </NoteRow>
          );
        })}
      </ColorNote>
      <LayerNote>新建图层</LayerNote>
      <ArrowDown width="30" height="50" viewBox="0 0 30 50" fill="#00ffff">
        <path d="M13 0h5v21c4-1 7-3 10-4-6 9-10 21-13 33-3-12-7-24-13-33 3 1 7 3 11 4z" />
      </ArrowDown>
      <Watermark>
        <Brand>
          Bai
          <svg width="76" height="82" viewBox="0 0 76 82" fill="rgba(255,255,255,.72)">
            <ellipse cx="13" cy="32" rx="9.500" ry="12" />
            <ellipse cx="31" cy="14" rx="9" ry="13" />
            <ellipse cx="54" cy="15" rx="9.500" ry="12.500" transform="rotate(8 54 15)" />
            <ellipse cx="67" cy="37" rx="8" ry="12" />
            <path d="M41 34c12 0 13 10 20 16 8 6 12 12 10 20-2 9-10 12-18 11-8-2-15-2-23 0-9 2-18-1-21-10-2-9 4-15 10-21s11-16 22-16z" />
            <text x="19" y="73" fontSize="36" fontWeight="bold" fill="#474547">
              du
            </text>
          </svg>
          <b>经验</b>
        </Brand>
        <Site>jingyan.baidu.com</Site>
      </Watermark>
    </Window>
  );
}
